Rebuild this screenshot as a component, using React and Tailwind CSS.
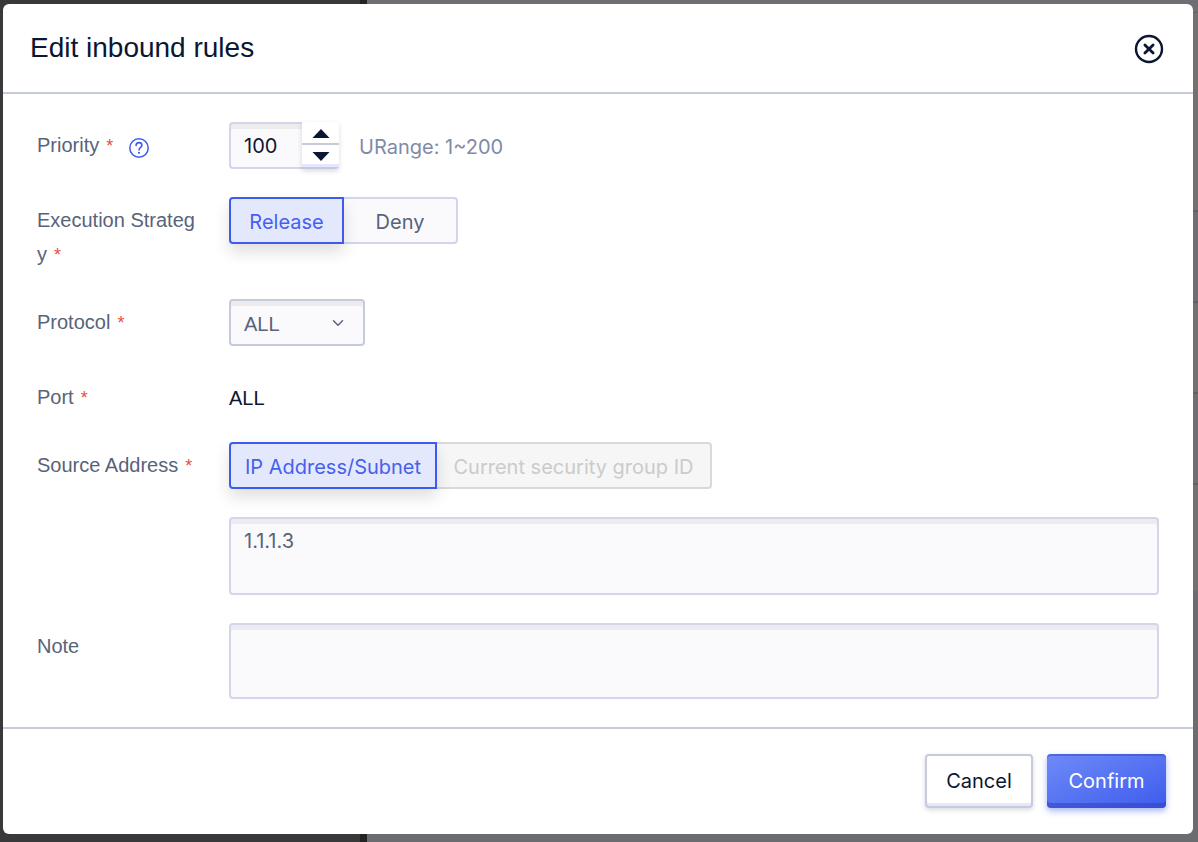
import React, { useState } from 'react';
import { ChevronDown } from 'lucide-react';

const sans = "font-['Liberation_Sans',Arial,sans-serif]";
const inter = "font-['Inter',sans-serif]";
const inset = 'shadow-[inset_0_5px_0_#ececee]';

function Backdrop() {
  return (
    <div aria-hidden="true" className="absolute inset-0 flex overflow-hidden">
      <div className="w-[360px] shrink-0 bg-[#39393b]" />
      <div className="w-[7px] shrink-0 bg-[#232324]" />
      <div className="flex flex-1 flex-col bg-[#6b6c6f]">
        <div className="h-[13px] shrink-0 border-b border-[#626367] bg-[#6e6f73]" />
        <div className="h-[199px] shrink-0 border-b-2 border-[#5f6068] bg-[#71726f]" />
        <div className="h-[91px] shrink-0 border-b-2 border-[#5f6068] bg-[#6e6f73]" />
        <div className="h-[91px] shrink-0 border-b-2 border-[#5f6068] bg-[#71726f]" />
        <div className="h-[91px] shrink-0 border-b-2 border-[#5f6068] bg-[#6e6f73]" />
        <div className="h-[106px] shrink-0 bg-[#71726f]" />
      </div>
    </div>
  );
}

function CloseIcon() {
  return (
    <svg width="30" height="30" viewBox="0 0 30 30" fill="none" stroke="#0b1633" strokeLinecap="round">
      <circle cx="15" cy="15" r="13" strokeWidth="2.4" />
      <path d="M10.9 10.9l8.2 8.2M19.1 10.9l-8.2 8.2" strokeWidth="2.8" />
    </svg>
  );
}

function HelpIcon() {
  return (
    <svg width="20" height="20" viewBox="0 0 20 20" fill="none" stroke="#3f5bec" strokeLinecap="round">
      <circle cx="10" cy="10" r="9.2" strokeWidth="1.5" />
      <path d="M7.1 7.5c0-1.8 1.2-2.9 2.9-2.9s2.9 1 2.9 2.6c0 2.2-2.8 2.3-2.8 4.8" strokeWidth="1.6" />
      <circle cx="10" cy="14.8" r="1.1" fill="#3f5bec" stroke="none" />
    </svg>
  );
}

function Row({ label, htmlFor, required, help, children }) {
  return (
    <div className="grid grid-cols-[160px_minmax(0,1fr)] gap-x-8">
      <div className="flex items-start pt-[6px]">
        <label htmlFor={htmlFor} className="break-all text-[20px] leading-[34px] text-[#58637a]">
          {label}
          {required && <span className="ml-[7px] text-[18px] leading-4 text-[#e8503f]">*</span>}
        </label>
        {help && (
          <button type="button" aria-label="Help" className="ml-4 mt-[10px]">
            <HelpIcon />
          </button>
        )}
      </div>
      <div className="min-w-0">{children}</div>
    </div>
  );
}

function Segment({ active, disabled, position, className, onClick, children }) {
  const state = disabled
    ? 'border-[#d9d9d9] bg-[#f6f6f6] text-[#cbcbcb]'
    : active
      ? 'relative z-10 border-[#3f5bec] bg-[#e4e8fd] text-[#4660ee] shadow-[0_8px_16px_rgba(0,0,0,0.13)]'
      : 'border-[#d3d6ea] bg-[#fafafc] text-[#58637a]';
  const edge = position === 'left' ? 'rounded-l border-2' : 'rounded-r border-y-2 border-r-2';
  return (
    <button
      type="button"
      aria-pressed={!!active}
      disabled={disabled}
      onClick={onClick}
      className={`h-[47px] pt-[2px] text-[20px] ${inter} ${edge} ${state} ${className}`}
    >
      {children}
    </button>
  );
}

export default function App() {
  const [priority, setPriority] = useState(100);
  const [strategy, setStrategy] = useState('release');
  const [address, setAddress] = useState('1.1.1.3');
  const [note, setNote] = useState('');

  const step = (by) => setPriority((p) => Math.min(200, Math.max(1, Number(p) + by)));

  return (
    <div className={`relative min-h-screen pt-1 pr-[5px] pb-2 pl-[3px] ${sans}`}>
      <Backdrop />
      <form
        role="dialog"
        aria-labelledby="dialog-title"
        onSubmit={(e) => e.preventDefault()}
        className="relative rounded-md bg-white"
      >
        <header className="flex h-[90px] items-center justify-between border-b-2 border-[#c5cadd] pr-[29px] pl-[27px]">
          <h2 id="dialog-title" className="text-[28px] leading-9 text-[#0b1633]">Edit inbound rules</h2>
          <button type="button" aria-label="Close" className="pt-[2px]">
            <CloseIcon />
          </button>
        </header>

        <div className="flex flex-col gap-7 px-[34px] py-7">
          <Row label="Priority" htmlFor="priority" required help>
            <div className="flex items-center">
              <input
                id="priority"
                value={priority}
                onChange={(e) => setPriority(e.target.value)}
                className={`h-[47px] w-[73px] rounded-l border-2 border-r-0 border-[#d3d6ea] bg-[#fafafc] pl-[13px] text-[20px] text-[#0b1633] outline-none ${inter} ${inset}`}
              />
              <div className="flex h-[47px] w-[37px] flex-col rounded-r border-b-2 border-[#c5cadd] bg-white shadow-[0_2px_5px_rgba(0,0,0,0.15)]">
                <button type="button" aria-label="Increase" onClick={() => step(1)} className="flex h-[23px] items-center justify-center border-b-2 border-[#c5cadd] pt-[2px]">
                  <svg width="18" height="9" viewBox="0 0 18 9"><path d="M9 0l8.5 9H.5z" fill="#0b1633" /></svg>
                </button>
                <button type="button" aria-label="Decrease" onClick={() => step(-1)} className="flex h-[22px] items-center justify-center border-b-3 border-[#e4e8fd] pt-1">
                  <svg width="18" height="9" viewBox="0 0 18 9"><path d="M9 9L.5 0h17z" fill="#0b1633" /></svg>
                </button>
              </div>
              <span className={`ml-5 pt-[2px] text-[20px] text-[#7f8aa8] ${inter}`}>URange: 1~200</span>
            </div>
          </Row>

          <Row label="Execution Strategy" required>
            <div className="flex">
              <Segment position="left" className="w-[115px]" active={strategy === 'release'} onClick={() => setStrategy('release')}>
                Release
              </Segment>
              <Segment position="right" className="w-[114px]" active={strategy === 'deny'} onClick={() => setStrategy('deny')}>
                Deny
              </Segment>
            </div>
          </Row>

          <Row label="Protocol" htmlFor="protocol" required>
            <div className="grid w-[136px] items-center">
              <select
                id="protocol"
                className={`col-start-1 row-start-1 h-[47px] appearance-none rounded border-2 border-[#c5cadd] bg-[#fafafc] pt-[2px] pl-[13px] text-[20px] text-[#58637a] outline-none ${inset}`}
              >
                <option>ALL</option>
                <option>TCP</option>
                <option>UDP</option>
              </select>
              <ChevronDown size={18} strokeWidth={2} className="pointer-events-none col-start-1 row-start-1 mr-[18px] justify-self-end text-[#58637a]" />
            </div>
          </Row>

          <Row label="Port" required>
            <p className="pt-2 text-[20px] leading-8 text-[#0b1633]">ALL</p>
          </Row>

          <Row label="Source Address" htmlFor="address" required>
            <div className="flex">
              <Segment position="left" className="w-[208px]" active>IP Address/Subnet</Segment>
              <Segment position="right" className="w-[275px]" disabled>Current security group ID</Segment>
            </div>
            <textarea
              id="address"
              value={address}
              onChange={(e) => setAddress(e.target.value)}
              className={`mt-7 block h-[78px] w-full resize-none rounded border-2 border-[#d3d6ea] bg-[#fafafc] px-[13px] py-2 text-[20px] leading-7 text-[#58637a] outline-none ${inter} ${inset}`}
            />
          </Row>

          <Row label="Note" htmlFor="note">
            <textarea
              id="note"
              value={note}
              onChange={(e) => setNote(e.target.value)}
              className={`block h-[76px] w-full resize-none rounded border-2 border-[#d3d6ea] bg-[#fafafc] px-[13px] py-2 text-[20px] leading-7 text-[#58637a] outline-none ${inter} ${inset}`}
            />
          </Row>
        </div>

        <footer className={`flex justify-end gap-[14px] border-t-2 border-[#c5cadd] pt-[25px] pr-[27px] pb-[26px] text-[20px] ${inter}`}>
          <button type="button" className="h-[54px] w-[108px] rounded border-2 border-[#c5cadd] bg-white text-[#0b1633] shadow-[inset_0_-3px_0_#e4e8fd,0_2px_5px_rgba(0,0,0,0.15)]">
            Cancel
          </button>
          <button type="submit" className="h-[54px] w-[119px] rounded bg-linear-to-br from-[#6f8af8] to-[#3f5bec] text-white shadow-[inset_0_2px_0_rgba(50,70,190,0.5),inset_0_-5px_0_rgba(50,70,190,0.6),0_3px_6px_rgba(63,91,236,0.45)]">
            Confirm
          </button>
        </footer>
      </form>
    </div>
  );
}
